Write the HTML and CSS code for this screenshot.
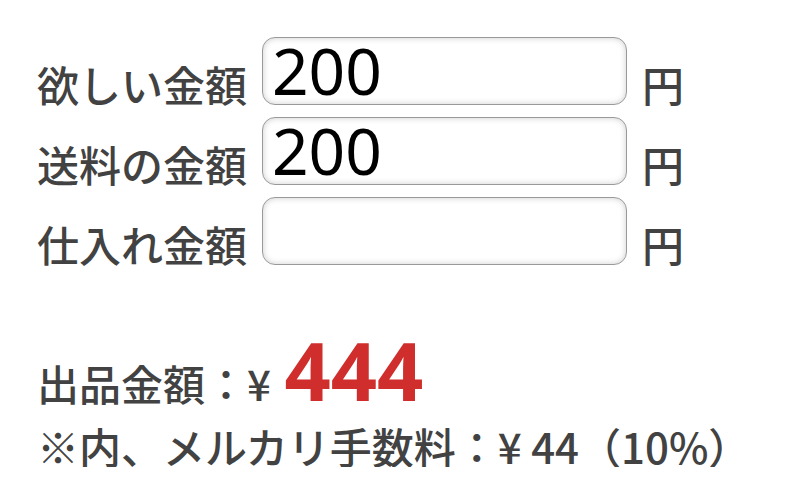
FILE: index.html
```html
<!DOCTYPE html>
<html lang="ja">
<head>
    <meta charset="UTF-8">
    <meta name="viewport" content="width=device-width, initial-scale=1.0">
    <title>メルカリ 出品金額計算</title>
    <link rel="stylesheet" href="styles.css">
</head>
<body>
    <form class="calc-form">
        <div class="calc-row">
            <label class="calc-label" for="want">欲しい金額</label>
            <input class="calc-input" id="want" type="text" value="200">
            <span class="calc-unit">円</span>
        </div>
        <div class="calc-row">
            <label class="calc-label" for="ship">送料の金額</label>
            <input class="calc-input" id="ship" type="text" value="200">
            <span class="calc-unit">円</span>
        </div>
        <div class="calc-row">
            <label class="calc-label" for="cost">仕入れ金額</label>
            <input class="calc-input" id="cost" type="text" value="">
            <span class="calc-unit">円</span>
        </div>
    </form>

    <div class="result">
        <div class="result-price">出品金額：¥ <span class="price">444</span></div>
        <div class="result-fee">※内、メルカリ手数料：¥ 44（10%）</div>
    </div>
</body>
</html>
```

FILE: styles.css
```css
body { margin: 0; padding: 37px 0 0 37px; font-family: "Noto Sans CJK JP", "Noto Sans", sans-serif; color: #424242; background-color: #fff; }
.calc-form { display: flex; flex-direction: column; gap: 12px; }
.calc-row { display: flex; align-items: flex-end; gap: 14px; }
.calc-label { font-size: 42px; font-weight: 500; line-height: 1; }
.calc-input { width: 365px; height: 68px; box-sizing: border-box; margin: 0 0 0 1px; padding: 0 9px 1px; border: 1.5px solid #999; border-radius: 13px; background-color: #fff; box-shadow: inset 0 0 6px rgba(0, 0, 0, 0.2); font-family: "Noto Sans", sans-serif; font-size: 64px; color: #000; outline: none; }
.calc-unit { font-size: 42px; font-weight: 500; line-height: 1; margin-left: 1px; }
.result { margin-top: 97px; }
.result-price { font-size: 42px; font-weight: 500; line-height: 1; }
.price { margin-left: 4px; font-family: "Noto Sans", sans-serif; font-size: 81px; font-weight: 700; color: #cf2e2c; line-height: 0; }
.result-fee { font-size: 42px; font-weight: 500; line-height: 1; margin-top: 21px; }
```
